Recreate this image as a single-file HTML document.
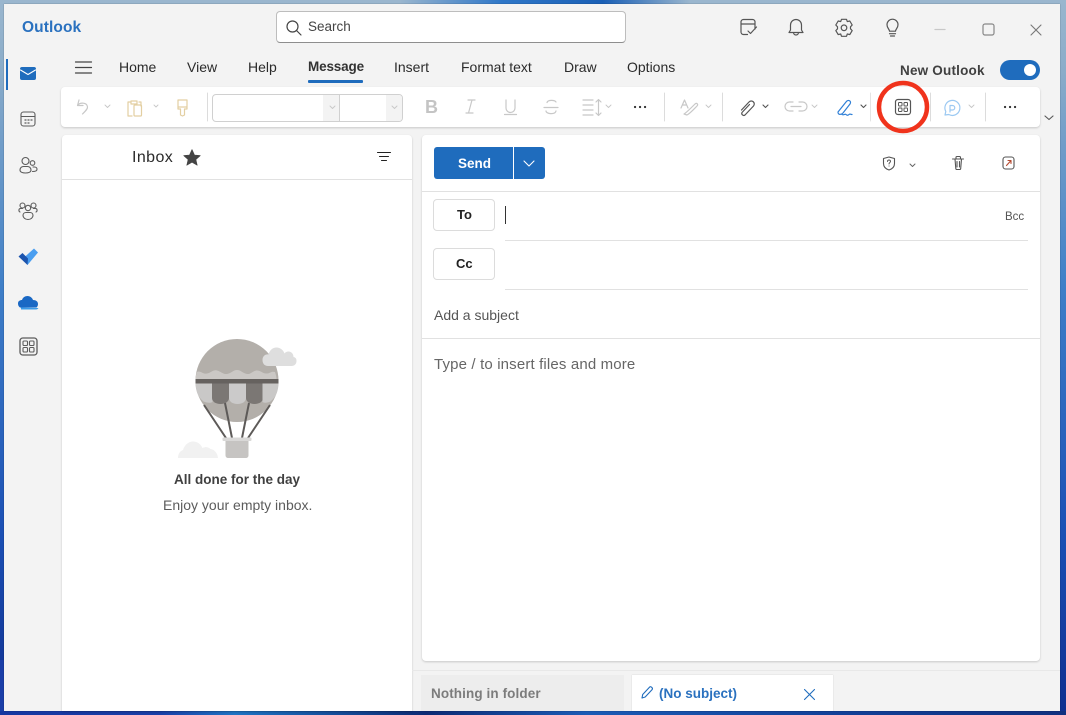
<!DOCTYPE html>
<html><head><meta charset="utf-8"><style>
html,body{margin:0;padding:0;width:1066px;height:715px;overflow:hidden}
body{position:relative;font-family:"Liberation Sans",sans-serif;background:#1c4fb0}
#root{position:absolute;left:0;top:0;width:1066px;height:715px;overflow:hidden}
.abs,.t{position:absolute}
.t{white-space:nowrap;line-height:18px;font-size:14px;color:#2b2b2b}
.card{position:absolute;background:#fff;border-radius:4px;box-shadow:0 1px 2px rgba(0,0,0,.18)}
.l{position:absolute;background:#e1e1e1;height:1px}
svg{position:absolute;left:0;top:0}
</style></head><body><div id="root">
<div class="abs" style="left:0;top:0;width:1066px;height:715px;background:linear-gradient(180deg,#9ab6ce 0,#8aacc9 10%,#3f7fc8 40%,#1b4fb4 75%,#0f2f8f 100%)"></div>
<div class="abs" style="left:400px;top:0;width:290px;height:4px;background:linear-gradient(90deg,#9ab6ce,#2f77c8 35%,#1a5fb5 70%,#9ab6ce)"></div>
<div class="abs" style="left:0;top:660px;width:4px;height:55px;background:#1a3ea8"></div>
<div class="abs" style="left:0;top:711px;width:1066px;height:4px;background:linear-gradient(90deg,#1636a0,#1a3fa8 15%,#1f74c4 22%,#0c2a74 40%,#1b5bb5 55%,#123f96 80%,#10307f)"></div>
<div class="abs" style="left:4px;top:4px;width:1056px;height:707px;background:#f3f3f3;box-shadow:0 0 1px rgba(0,0,0,.4)"></div>

<div class="t" style="left:22px;top:19px;font-size:15.500px;letter-spacing:.1px;font-weight:bold;color:#2a71bf">Outlook</div>
<div class="abs" style="left:276px;top:11px;width:348px;height:30px;background:#fff;border:1px solid #bdbdbd;border-bottom-color:#8e8e8e;border-radius:4px"></div>
<div class="t" style="left:308px;top:18px;font-size:13.500px;color:#444">Search</div>

<div class="t" style="left:119px;top:58px">Home</div>
<div class="t" style="left:187px;top:58px">View</div>
<div class="t" style="left:248px;top:58px">Help</div>
<div class="t" style="left:308px;top:58px;font-weight:bold;font-size:13.500px;letter-spacing:-.15px;color:#333">Message</div>
<div class="abs" style="left:308px;top:80px;width:55px;height:3px;background:#1f6cbd;border-radius:1px"></div>
<div class="t" style="left:394px;top:58px">Insert</div>
<div class="t" style="left:461px;top:58px">Format text</div>
<div class="t" style="left:564px;top:58px">Draw</div>
<div class="t" style="left:627px;top:58px">Options</div>
<div class="t" style="left:900px;top:62px;font-weight:bold;font-size:13.500px;letter-spacing:.2px;color:#404040">New Outlook</div>
<div class="abs" style="left:1000px;top:60px;width:40px;height:20px;background:#1f6cbd;border-radius:10px"></div>
<div class="abs" style="left:1024px;top:64px;width:12px;height:12px;background:#fff;border-radius:50%"></div>

<div class="card" style="left:61px;top:87px;width:979px;height:40px"></div>
<div class="abs" style="left:212px;top:94px;width:189px;height:26px;border:1px solid #d0d0d0;border-radius:4px;background:#fff;overflow:hidden">
 <div class="abs" style="left:110px;top:0;width:16px;height:26px;background:#f3f3f3"></div>
 <div class="abs" style="left:126px;top:0;width:1px;height:26px;background:#d0d0d0"></div>
 <div class="abs" style="left:173px;top:0;width:16px;height:26px;background:#f3f3f3"></div>
</div>
<div class="t" style="left:425px;top:98px;font-weight:bold;font-size:18px;color:#c4c4c4">B</div>

<div class="card" style="left:62px;top:135px;width:350px;height:576px;border-radius:4px 4px 0 0"></div>
<div class="l" style="left:62px;top:179px;width:350px"></div>
<div class="t" style="left:132px;top:149px;font-size:16px;letter-spacing:.4px;color:#2b2b2b">Inbox</div>
<div class="t" style="left:174px;top:471px;font-size:13.500px;font-weight:bold;color:#404040">All done for the day</div>
<div class="t" style="left:163px;top:496px;font-size:14px;color:#5c5c5c">Enjoy your empty inbox.</div>

<div class="card" style="left:422px;top:135px;width:618px;height:526px"></div>
<div class="abs" style="left:434px;top:147px;width:79px;height:32px;background:#1f6cbd;border-radius:3px 0 0 3px"></div>
<div class="abs" style="left:514px;top:147px;width:31px;height:32px;background:#1f6cbd;border-radius:0 3px 3px 0"></div>
<div class="t" style="left:458px;top:155px;font-weight:bold;font-size:13.500px;color:#fff">Send</div>
<div class="l" style="left:422px;top:191px;width:618px"></div>
<div class="abs" style="left:433px;top:199px;width:60px;height:30px;border:1px solid #dcdcdc;border-radius:4px;background:#fff"></div>
<div class="t" style="left:457px;top:206px;font-weight:bold;font-size:13px;color:#222">To</div>
<div class="abs" style="left:505px;top:206px;width:1px;height:18px;background:#333"></div>
<div class="t" style="left:1005px;top:208px;font-size:11.500px;color:#555">Bcc</div>
<div class="l" style="left:505px;top:240px;width:523px"></div>
<div class="abs" style="left:433px;top:248px;width:60px;height:30px;border:1px solid #dcdcdc;border-radius:4px;background:#fff"></div>
<div class="t" style="left:456px;top:255px;font-weight:bold;font-size:13px;color:#222">Cc</div>
<div class="l" style="left:505px;top:289px;width:523px"></div>
<div class="t" style="left:434px;top:306px;font-size:14px;color:#555">Add a subject</div>
<div class="l" style="left:422px;top:338px;width:618px"></div>
<div class="t" style="left:434px;top:356px;font-size:15px;letter-spacing:.15px;color:#666">Type / to insert files and more</div>

<div class="abs" style="left:412px;top:670px;width:648px;height:1px;background:#e8e8e8"></div>
<div class="abs" style="left:421px;top:675px;width:203px;height:36px;background:#ededed"></div>
<div class="t" style="left:431px;top:685px;font-weight:bold;font-size:13.500px;letter-spacing:.1px;color:#7c7c7c">Nothing in folder</div>
<div class="abs" style="left:632px;top:675px;width:201px;height:36px;background:#fff;box-shadow:0 0 1px rgba(0,0,0,.2)"></div>
<div class="t" style="left:659px;top:685px;font-weight:bold;font-size:13.500px;color:#2a71bf">(No subject)</div>

<svg width="1066" height="715" viewBox="0 0 1066 715" fill="none" stroke-linecap="round" stroke-linejoin="round">
<g stroke="#444" stroke-width="1.200"><circle cx="292.500" cy="26.500" r="5.500"/><path d="M296.500 30.500l4.500 4.500"/></g>
<g stroke="#555" stroke-width="1.200">
<path d="M755 29v-7a2.500 2.500 0 0 0-2.500-2.500h-9a2.500 2.500 0 0 0-2.500 2.500v10a2.500 2.500 0 0 0 2.500 2.500h4M741 24h14M748 31l2.500 2.500 6-6.500"/>
<path transform="translate(0 2)" d="M789 30.500h14l-1.500-2.500v-5a5.500 5.500 0 0 0-11 0v5zM793.500 30.500a2.500 2.500 0 0 0 5 0"/>
<g transform="translate(0 .8)"><circle cx="844" cy="27" r="2.800"/><path d="M841.500 18.500h5l.8 2.300 2.500-.6 2.400 4-1.700 1.800v2l1.700 1.800-2.400 4-2.500-.6-.8 2.300h-5l-.8-2.300-2.500.6-2.400-4 1.700-1.800v-2l-1.700-1.800 2.400-4 2.500.6z"/></g>
<path transform="translate(0 1.200)" d="M889.500 30c0-2-2.500-3-2.500-6.500a5.500 5.500 0 0 1 11 0c0 3.500-2.500 4.500-2.500 6.500zM889.500 32.500h6M890.500 34.800h4"/>
</g>
<path d="M935 29.500h10" stroke="#c8c8c8" stroke-width="1.300"/>
<rect x="983" y="24" width="11" height="11" rx="2" stroke="#888" stroke-width="1.200"/>
<path d="M1031 25l10 10M1041 25l-10 10" stroke="#777" stroke-width="1.100"/>
<path d="M75.500 62h16M75.500 67.500h16M75.500 73h16" stroke="#444" stroke-width="1.200"/>
<rect x="6" y="59" width="2" height="31" fill="#1f6cbd"/>
<rect x="20" y="67" width="16" height="13" rx="2" fill="#1f6cbd"/><path d="M20.500 70l7.500 4.500 7.500-4.500" stroke="#fff" stroke-width="1.100"/>
<g stroke="#5c5c5c" stroke-width="1.100">
<rect x="21" y="112" width="14" height="14" rx="2.500"/><path d="M21.500 116.500h13"/><path d="M25 120h1M28 120h1M31 120h1M25 123h1M28 123h1" stroke-width="1.300"/>
<circle cx="25.500" cy="161" r="3.500"/><path d="M20 170c0-2 1.500-3.500 3.500-3.500h4c2 0 3.500 1.500 3.500 3.500s-2.500 3-5.500 3-5.500-1-5.500-3z"/><circle cx="32.500" cy="163" r="2.300"/><path d="M33 167h1.500c1.500 0 2.500 1 2.500 2.200 0 1.500-2 2.300-4.500 2.300"/>
<circle cx="28" cy="208" r="2.700"/><circle cx="22.500" cy="205.500" r="2.500"/><circle cx="33.500" cy="205.500" r="2.500"/>
<path d="M23 215.500c0-2 1.500-3 3-3h4c1.500 0 3 1 3 3s-2 4-5 4-5-2-5-4zM20 212c-1.500-.5-1.500-3.500.5-3.500h2M36 212c1.500-.5 1.500-3.500-.5-3.500h-2"/>
<rect x="20" y="338" width="17" height="17" rx="2.800" stroke-width="1.300"/><rect x="23" y="341" width="4.500" height="4.500" rx="1"/><rect x="29.500" y="341" width="4.500" height="4.500" rx="1"/><rect x="23" y="347.500" width="4.500" height="4.500" rx="1"/><rect x="29.500" y="347.500" width="4.500" height="4.500" rx="1"/>
</g>
<path d="M23 258.500L34 248.500 38 252.500 27.500 265z" fill="#4a9ef0"/><path d="M18.500 256.500l4-3.500 5.500 5.500-.5 6.500z" fill="#1c54ad"/>
<path d="M18 303.500c0-2.500 2-3.500 4-3.500.8-2.600 3-4 5.500-4 2.800 0 4.800 2 5.500 4 3 0 5 1.500 5 4 0 1.300-.5 2.500-1.500 3.500l-16.500 0c-1.300-.8-2-2.300-2-4z" fill="#1a68c4"/><path d="M21 309.500h15c1.200 0 2-.5 2.400-1.500l-17.500-.5z" fill="#3b9be8"/>
<g stroke="#c8c8c8" stroke-width="1.200">
<path d="M79 100l-1.500 5.500 5.500 0M78 105c2-2.500 9-3 9.500 2 .2 2-2 4-5 7"/>
<path d="M105 105l2.500 2.500 2.500-2.500M154 105l2 2 2-2M330 106l2.500 2.500 2.500-2.500M392 106l2.500 2.500 2.500-2.500M606 105l2.500 2.500 2.500-2.500M706 105l2.500 2.500 2.500-2.500M812 105l2.500 2.500 2.500-2.500M969 105l2.500 2.500 2.500-2.500" stroke-width=".9"/>
<path d="M472 100l-3.500 13M468 100h7M466 113h7"/>
<path d="M506 100v8a4.500 4.500 0 0 0 9 0v-8M504.500 114.500h12"/>
<path d="M544 107.500h14M556 102c-1-2-8-2.500-9 .5M546 111c0 3 9 4 10 0"/>
<path d="M583 100h10M583 105h10M583 110h10M583 115h10M598.500 100v15M596 102l2.500-2.500 2.500 2.500M596 113l2.500 2.500 2.500-2.500"/>
<path d="M681 108l3.500-8 3.500 8M682.500 105h4M684 114c2-1 9-8 11-10 2-1.500 3.500 .5 2 2-2 2-7 7.500-10 9z"/>
<path d="M793 102h-3.500a4.500 4.500 0 0 0 0 9h3.500M799 102h3.500a4.500 4.500 0 0 1 0 9h-3.500M791 106.500h10"/>
</g>
<g stroke="#e3cfa2" stroke-width="1.200">
<path d="M130 102h-2v14h4M139 102h2v4M131 101h6v3h-6z"/><rect x="134" y="105" width="7.500" height="11" rx="1"/>
<path d="M178 100h9v7h-9zM178 107h9v2h-2.500v6l-2 1-2-1v-6h-2.500z"/>
</g>
<g stroke="#dcdcdc" stroke-width="1">
<path d="M207.500 93v28M664.500 93v28M722.500 93v28M985.500 93v28M930.500 93v28"/>
<path d="M870.500 93v28" stroke="#e4e4e4"/>
</g>
<path d="M635 107h.1M640 107h.1M645 107h.1M1005 107h.1M1010 107h.1M1015 107h.1" stroke="#333" stroke-width="2.200"/>
<path d="M741.500 110l7.500-8a3 3 0 0 1 4.500 4l-8.500 9a2 2 0 0 1-3-2.500l7.500-8" stroke="#555" stroke-width="1.200"/>
<path d="M763 105l2.500 2.500 2.500-2.500M861 105l2.500 2.500 2.500-2.500M1045 116l4 3.500 4-3.500" stroke="#555" stroke-width="1.100"/>
<path d="M838 112l8-10c2-3 6-1 4 2l-7 9c-2 2-5 2-5-1zM842 114.500c2 1 3-1 4 0s2 1 3 0 2 0 3 0" stroke="#2f7fd6" stroke-width="1.200"/>
<rect x="895.500" y="99.500" width="15" height="15" rx="2.500" stroke="#555" stroke-width="1.200"/>
<g stroke="#555" stroke-width="1"><rect x="898.500" y="102.500" width="3.500" height="3.500" rx=".7"/><rect x="904" y="102.500" width="3.500" height="3.500" rx=".7"/><rect x="898.500" y="108" width="3.500" height="3.500" rx=".7"/><rect x="904" y="108" width="3.500" height="3.500" rx=".7"/></g>
<circle cx="903" cy="107" r="24" stroke="#f0331c" stroke-width="4.500"/>
<path d="M945 115l.8-3.500a7.500 7.500 0 1 1 3 3zM950 112v-6.500h2.500a2.200 2.200 0 0 1 0 4.500h-2.500" stroke="#9cc9f2" stroke-width="1.200"/>
<path d="M192 149.500l2.500 5.500 5.800.6-4.400 3.900 1.300 5.800-5.200-3-5.200 3 1.300-5.800-4.400-3.900 5.800-.6z" fill="#444" stroke="#444" stroke-width=".6"/>
<path d="M377.500 152.500h13M379.500 156.500h9M381.500 160.500h5" stroke="#222" stroke-width="1.100"/>
<path d="M524 161l5 5 5-5" stroke="#fff" stroke-width="1.100"/>
<path d="M889 157l5.500 1.500v5c0 3.500-2.500 5.500-5.500 6.500-3-1-5.500-3-5.500-6.500v-5z" stroke="#555" stroke-width="1.100"/>
<path d="M887.500 161.500c0-2 3-2 3 0 0 1-1.500 1-1.500 2.500M889 166h.1" stroke="#555"/>
<path d="M910 164l2.500 2.500 2.500-2.500" stroke="#666"/>
<path d="M952.500 159h11M955 159l.8 9.500c0 .8.600 1 1.200 1h2.500c.6 0 1.200-.2 1.200-1l.8-9.500M956 159v-1.500c0-.5 .5-1 1-1h2.500c.5 0 1 .5 1 1V159M957 161.500v5.500M959.500 161.500v5.500" stroke="#555" stroke-width="1.100"/>
<rect x="1003" y="157" width="11" height="12" rx="2.500" stroke="#555" stroke-width="1.100"/><path d="M1006.500 165.500l4.500-5M1008 160.500h3v3" stroke="#b5492f" stroke-width="1.100"/>
<path d="M642 698l.7-3.500 7-7.500c1-1 3.500 1 2.500 2.500l-7 7.500z" stroke="#1f6cbd" stroke-width="1.100"/>
<path d="M804.500 689.500l10 10M814.500 689.500l-10 10" stroke="#1f6cbd" stroke-width="1.100"/>
<!-- balloon -->
<circle cx="237" cy="380.500" r="41.500" fill="#b3afaa"/>
<path d="M195.500 380c0-3 .5-5 1.500-8 3-2 6 2.500 10 1.500 5-1 6-4 10-3s6 4 10 3.500 6-4 10-4 6 3.500 10 4 6-3.500 10-3.500 6 3.500 10 3 4-2.500 8-1.500c1 3 1.500 5 1.500 8z" fill="#cbc8c5"/>
<path d="M195.500 383h17v19c-3 1.500-6 .5-9-.500-5-4-8-10-8-18.500z" fill="#c9c8c7"/>
<path d="M212 383h17v15c0 3.500-3.500 6-8.500 6s-8.500-2.500-8.500-6z" fill="#7b7774"/>
<path d="M229 383h17v15c0 3.500-3.500 6-8.500 6s-8.500-2.500-8.500-6z" fill="#cbcaca"/>
<path d="M246 383h17v15c0 3.500-3.500 6-8.500 6s-8.500-2.500-8.500-6z" fill="#7b7774"/>
<path d="M262.500 383h16c0 8.500-3 14.500-8 18.500-3 1-5 2-8 .5z" fill="#c9c8c7"/>
<rect x="195.500" y="379" width="83" height="4.500" fill="#66625f"/>
<path d="M204 405l22 33M225 403l7 35M249 403l-7 35M270 405l-22 33" stroke="#5d5a58" stroke-width="2" stroke-linecap="butt"/>
<rect x="222.500" y="437.500" width="29" height="3.500" rx="1" fill="#d9d8d7"/>
<path d="M225.500 441h23v14c0 2-1 3-3 3h-17c-2 0-3-1-3-3z" fill="#c6c4c2"/>
<path d="M268 366c-3.500 0-5.500-2.500-5.500-6s2.500-6 6-5.500c1-4 4-7 8-7s7 3 8 6c1-1.500 2.500-2 4-2 3 0 5 2.500 5 5.500 3 .5 3 3 3 4 0 3-2 5-5 5z" fill="#dedede"/>
<path d="M178 458c0-4 2-7 5-8 1.500-5 5.500-8.500 10-8.500s7.500 2.500 9.500 6.500c3-1.500 6-1 8 1 4 .5 7 4 7.500 9z" fill="#f1f1f1"/>
</svg>
</div></body></html>
